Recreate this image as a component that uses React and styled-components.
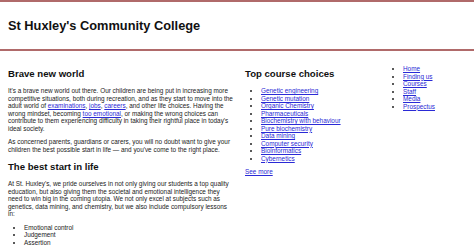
import React from "react";
import styled, { createGlobalStyle } from "styled-components";

const GlobalStyle = createGlobalStyle`
    body {
        margin: 0;
        font-family: "Liberation Sans", Arial, sans-serif;
        font-size: 6.4px;
        line-height: 7.5px;
        color: #222;
        background: #fff;
    }
`;

const Header = styled.header`
    display: flex;
    align-items: center;
    height: 47px;
    padding: 0 8px;
    border-top: 2px solid #b06a6a;
    border-bottom: 2px solid #b06a6a;

    h1 {
        margin: 0;
        font-size: 12.8px;
        line-height: normal;
        color: #111;
    }
`;

const Main = styled.main`
    display: grid;
    grid-template-columns: 237px 142px 1fr;
    align-items: start;
    padding: 9px 8px 0;
`;

const Column = styled.section`
    width: ${(props) => props.w || "auto"};

    h2 {
        font-size: 9.6px;
        line-height: 11px;
        margin: 8px 0;
        color: #111;
    }

    p {
        margin: 6.2px 0;
    }
`;

const List = styled.ul`
    margin: 6.2px 0;
    padding-left: 16px;
`;

const NavList = styled.ul`
    margin: 5px 0 0;
    padding-left: 16px;
`;

const A = styled.a`
    color: #2a2ad6;
    text-decoration: underline;
`;

const courses = [
    "Genetic engineering",
    "Genetic mutation",
    "Organic Chemistry",
    "Pharmaceuticals",
    "Biochemistry with behaviour",
    "Pure biochemistry",
    "Data mining",
    "Computer security",
    "Bioinformatics",
    "Cybernetics",
];

const navItems = ["Home", "Finding us", "Courses", "Staff", "Media", "Prospectus"];

const App = () => {
    return (
        <>
            <GlobalStyle />
            <Header>
                <h1>St Huxley's Community College</h1>
            </Header>
            <Main>
                <Column w="226px">
                    <h2>Brave new world</h2>
                    <p>
                        It's a brave new world out there. Our children are being put in
                        increasing more competitive situations, both during recreation, and
                        as they start to move into the adult world of{" "}
                        <A href="#">examinations</A>, <A href="#">jobs</A>,{" "}
                        <A href="#">careers</A>, and other life choices. Having the wrong
                        mindset, becoming <A href="#">too emotional</A>, or making the wrong
                        choices can contribute to them experiencing difficulty in taking
                        their rightful place in today's ideal society.
                    </p>
                    <p>
                        As concerned parents, guardians or carers, you will no doubt want to
                        give your children the best possible start in life — and you've come
                        to the right place.
                    </p>
                    <h2>The best start in life</h2>
                    <p>
                        At St. Huxley's, we pride ourselves in not only giving our students a
                        top quality education, but also giving them the societal and
                        emotional intelligence they need to win big in the coming utopia. We
                        not only excel at subjects such as genetics, data mining, and
                        chemistry, but we also include compulsory lessons in:
                    </p>
                    <List>
                        <li>Emotional control</li>
                        <li>Judgement</li>
                        <li>Assertion</li>
                    </List>
                </Column>
                <Column>
                    <h2>Top course choices</h2>
                    <List>
                        {courses.map((c) => (
                            <li key={c}>
                                <A href="#">{c}</A>
                            </li>
                        ))}
                    </List>
                    <p>
                        <A href="#">See more</A>
                    </p>
                </Column>
                <nav>
                    <NavList>
                        {navItems.map((n) => (
                            <li key={n}>
                                <A href="#">{n}</A>
                            </li>
                        ))}
                    </NavList>
                </nav>
            </Main>
        </>
    );
};

export default App;
